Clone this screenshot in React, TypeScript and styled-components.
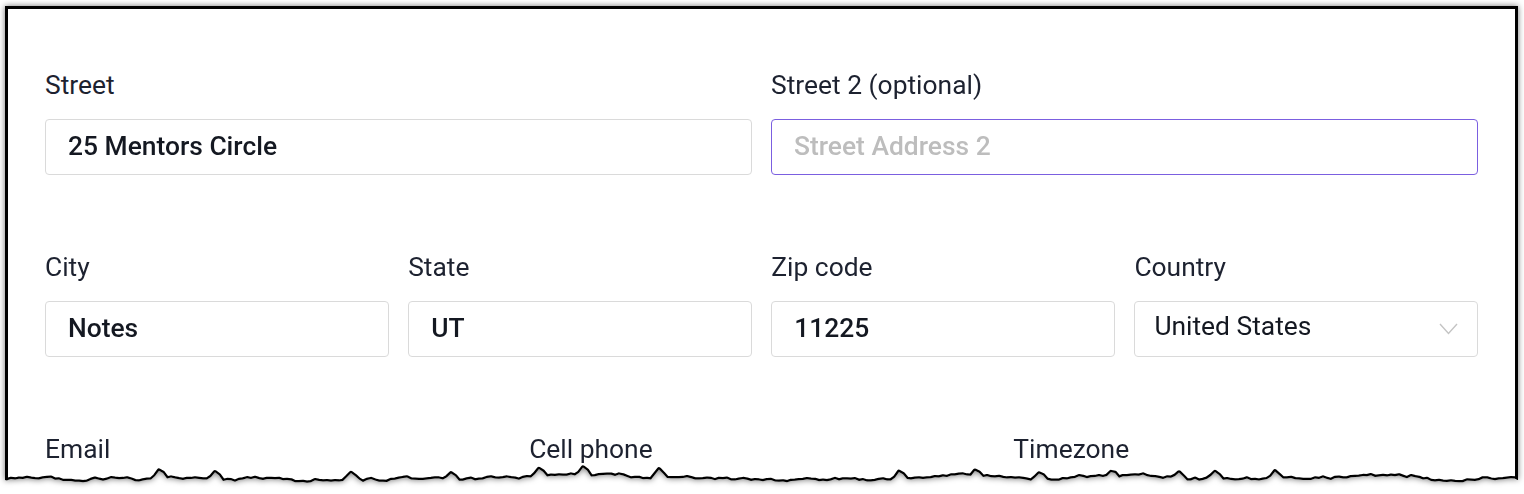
import React, { useMemo } from 'react';
import styled, { createGlobalStyle } from 'styled-components';

const GlobalStyle = createGlobalStyle`
  html, body {
    margin: 0;
    padding: 0;
    background: #ffffff;
    overflow: hidden;
  }
  body {
    font-family: Roboto, "Noto Sans", "Liberation Sans", sans-serif;
    -webkit-font-smoothing: antialiased;
  }
`;

const FRAME_W = 1513;
const FRAME_H = 488;
const EDGE_BASE = 473;

const Page = styled.div`
  padding: 6px 0 0 5px;
  height: 494px;
  box-sizing: border-box;
`;

const Shadow = styled.div`
  width: ${FRAME_W}px;
  filter: drop-shadow(0 0 3px rgba(0, 0, 0, 0.55));
`;

const Frame = styled.div`
  position: relative;
  width: ${FRAME_W}px;
  height: ${FRAME_H}px;
  box-sizing: border-box;
  background: #fff;
  box-shadow: inset 3px 3px 0 #000, inset -3px 0 0 #000;
  padding: 64px 40px 0 40px;
`;

const TornEdge = styled.svg`
  position: absolute;
  left: 0;
  top: 0;
  pointer-events: none;
`;

const Form = styled.div`
  display: flex;
  flex-direction: column;
  gap: 77px;
`;

const Row = styled.div<{ $cols: number }>`
  display: grid;
  grid-template-columns: repeat(${({ $cols }) => $cols}, 1fr);
  column-gap: ${({ $cols }) => ($cols === 2 ? '19px' : '19.5px')};
`;

const Field = styled.div`
  display: flex;
  flex-direction: column;
  min-width: 0;
`;

const Label = styled.label`
  font-size: 26.4px;
  line-height: 30px;
  font-weight: 400;
  color: #1d2230;
  margin-bottom: 19px;
`;

const Input = styled.input<{ $focused?: boolean }>`
  box-sizing: border-box;
  width: 100%;
  height: 56px;
  margin: 0;
  border: 1px solid ${({ $focused }) => ($focused ? '#7b5fe0' : '#dadada')};
  border-radius: 4px;
  padding: 0 20px 3px 22px;
  font-family: Roboto, "Noto Sans", "Liberation Sans", sans-serif;
  font-size: 26.4px;
  font-weight: 500;
  color: #141821;
  background: #fff;
  outline: none;

  &::placeholder {
    color: #bdbdbd;
    font-weight: 500;
  }
`;

const SelectBox = styled.div`
  position: relative;
  box-sizing: border-box;
  height: 56px;
  border: 1px solid #dadada;
  border-radius: 4px;
  padding: 0 19px 6px 19px;
  display: flex;
  align-items: center;
  justify-content: space-between;
  font-size: 26.4px;
  font-weight: 400;
  color: #141821;
`;

const Chevron = styled.svg`
  flex: none;
  margin-top: 6px;
`;

function rng(seed: number) {
  let s = seed;
  return () => {
    s = (s * 1103515245 + 12345) % 2147483648;
    return s / 2147483648;
  };
}

// jagged bottom edge of the clipped screenshot
function useEdge() {
  return useMemo(() => {
    const rand = rng(424242);
    const pts: [number, number][] = [];
    let v = 0;
    let spike = 0;
    let spikeH = 0;
    for (let x = -2; x <= FRAME_W + 6; x += 4) {
      v = v * 0.93 + (rand() - 0.5) * 2.4;
      v = Math.max(-4, Math.min(3, v));
      let y = EDGE_BASE + v + (rand() - 0.5) * 1.4;
      if (spike > 0) {
        y -= spikeH * (spike === 2 ? 1 : 0.6);
        spike -= 1;
      } else if (rand() < 0.05) {
        spike = 2;
        spikeH = 4 + rand() * 5;
        y -= spikeH * 0.45;
      }
      y = Math.min(y, EDGE_BASE + 5);
      pts.push([x, Math.round(y * 10) / 10]);
    }
    return pts;
  }, []);
}

function Select({ value }: { value: string }) {
  return (
    <SelectBox>
      <span>{value}</span>
      <Chevron width="19" height="12" viewBox="0 0 19 12">
        <polyline points="1,1 9.5,10.5 18,1" fill="none" stroke="#c4c4c4" strokeWidth="1.4" />
      </Chevron>
    </SelectBox>
  );
}

export default function App() {
  const pts = useEdge();
  const clip = `polygon(0px 0px, ${FRAME_W}px 0px, ${pts
    .slice()
    .reverse()
    .map(([x, y]) => `${Math.min(Math.max(x, 0), FRAME_W)}px ${y}px`)
    .join(', ')})`;
  const line = pts.map(([x, y]) => `${x},${y}`).join(' ');

  return (
    <Page>
      <GlobalStyle />
      <Shadow>
        <Frame style={{ clipPath: clip }}>
          <Form>
            <Row $cols={2}>
              <Field>
                <Label>Street</Label>
                <Input defaultValue="25 Mentors Circle" />
              </Field>
              <Field>
                <Label>Street 2 (optional)</Label>
                <Input $focused placeholder="Street Address 2" />
              </Field>
            </Row>
            <Row $cols={4}>
              <Field>
                <Label>City</Label>
                <Input defaultValue="Notes" />
              </Field>
              <Field>
                <Label>State</Label>
                <Input defaultValue="UT" />
              </Field>
              <Field>
                <Label>Zip code</Label>
                <Input defaultValue="11225" />
              </Field>
              <Field>
                <Label>Country</Label>
                <Select value="United States" />
              </Field>
            </Row>
            <Row $cols={3}>
              <Field>
                <Label>Email</Label>
              </Field>
              <Field>
                <Label>Cell phone</Label>
              </Field>
              <Field>
                <Label>Timezone</Label>
              </Field>
            </Row>
          </Form>
          <TornEdge width={FRAME_W} height={FRAME_H} viewBox={`0 0 ${FRAME_W} ${FRAME_H}`}>
            <polyline points={line} fill="none" stroke="#000" strokeWidth="4.5" strokeLinejoin="round" />
          </TornEdge>
        </Frame>
      </Shadow>
    </Page>
  );
}
